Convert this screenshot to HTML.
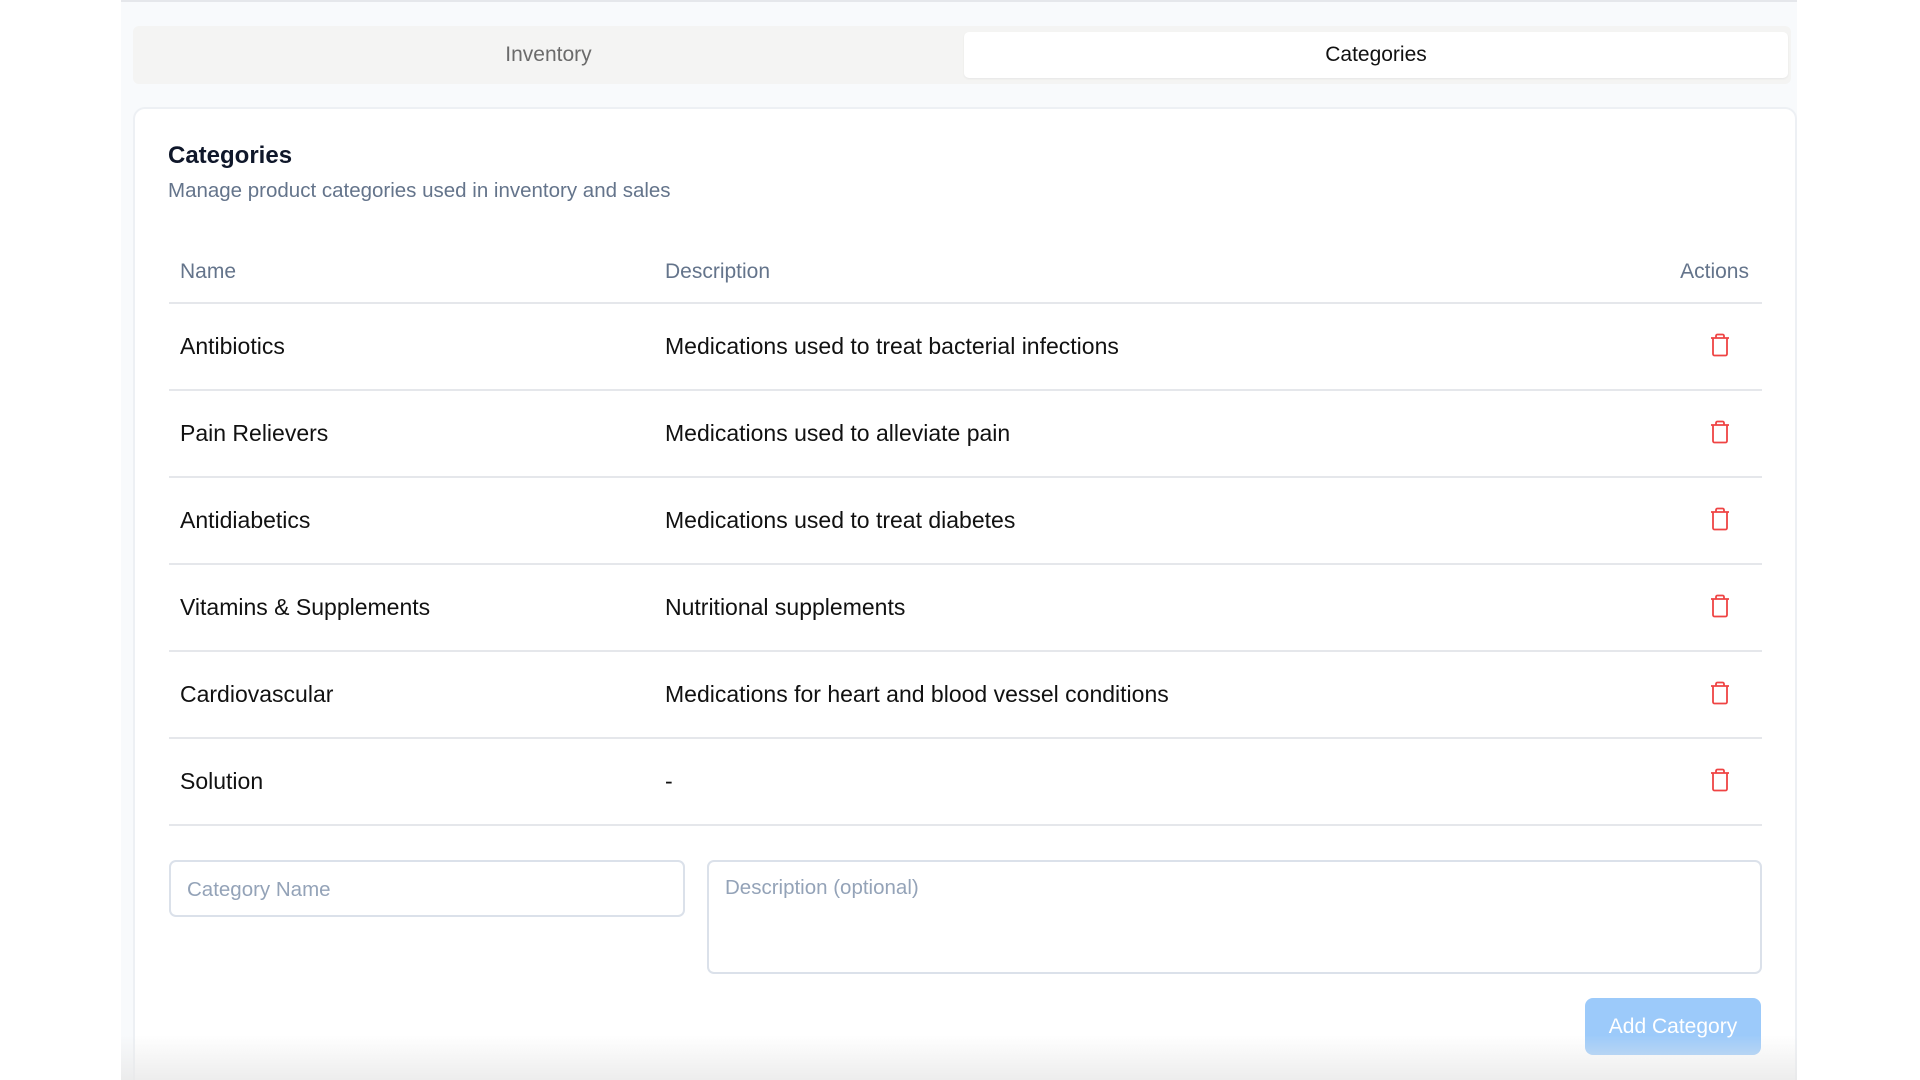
<!DOCTYPE html>
<html><head><meta charset="utf-8"><style>
*{box-sizing:border-box;margin:0;padding:0}
html,body{width:1920px;height:1080px;overflow:hidden}
body{background:#fff;font-family:"Liberation Sans",Arial,sans-serif;position:relative}
.wrap{position:absolute;left:121px;top:0;width:1676px;height:1080px;background:#f8fafc;border-top:2px solid #e5e7eb;overflow:hidden}
.tabs{position:absolute;left:12px;top:24px;width:1658px;height:58px;background:#f4f4f3;border-radius:6px}
.tab{position:absolute;top:0;height:58px;line-height:58px;text-align:center;font-size:21px;color:#6b6b6b}
.tab.a{left:831px;top:6px;width:824px;height:46px;line-height:46px;background:#fff;color:#111;border-radius:5px;box-shadow:0 1px 2px rgba(0,0,0,.06)}
.card{position:absolute;left:12px;top:105px;width:1664px;height:1000px;background:#fff;border:2px solid #edf0f4;border-radius:12px}
h1{position:absolute;left:33px;top:33px;font-size:24px;font-weight:bold;color:#0f172a}
.sub{position:absolute;left:33px;top:70px;font-size:20.5px;color:#64748b}
.th{position:absolute;top:151px;font-size:21px;color:#64748b}
.line{position:absolute;left:34px;width:1593px;height:2px;background:#e5e7eb}
.cell{position:absolute;font-size:23px;color:#111}
.trash{position:absolute;left:1574px}
.ph{position:absolute;font-size:20.5px;color:#94a3b8}
.btn{position:absolute;left:1450px;top:889px;width:176px;height:57px;background:#9ccafa;border-radius:8px;color:#fff;font-size:21px;text-align:center;line-height:57px}
.fade{position:absolute;left:0;right:0;bottom:0;height:45px;background:linear-gradient(to bottom,rgba(255,255,255,0),rgba(232,232,232,.8))}
</style></head><body>
<div class="wrap">
<div class="tabs"><div class="tab" style="left:0;width:831px">Inventory</div><div class="tab a">Categories</div></div>
<div class="card">
<h1>Categories</h1>
<div class="sub">Manage product categories used in inventory and sales</div>
<div class="th" style="left:45px">Name</div>
<div class="th" style="left:530px">Description</div>
<div class="th" style="right:46px">Actions</div>
<div class="line" style="top:193px"></div>
<div class="cell" style="left:45px;top:224px">Antibiotics</div><div class="cell" style="left:530px;top:224px">Medications used to treat bacterial infections</div>
<div class="line" style="top:280px"></div>
<div class="cell" style="left:45px;top:311px">Pain Relievers</div><div class="cell" style="left:530px;top:311px">Medications used to alleviate pain</div>
<div class="line" style="top:367px"></div>
<div class="cell" style="left:45px;top:398px">Antidiabetics</div><div class="cell" style="left:530px;top:398px">Medications used to treat diabetes</div>
<div class="line" style="top:454px"></div>
<div class="cell" style="left:45px;top:485px">Vitamins &amp; Supplements</div><div class="cell" style="left:530px;top:485px">Nutritional supplements</div>
<div class="line" style="top:541px"></div>
<div class="cell" style="left:45px;top:572px">Cardiovascular</div><div class="cell" style="left:530px;top:572px">Medications for heart and blood vessel conditions</div>
<div class="line" style="top:628px"></div>
<div class="cell" style="left:45px;top:659px">Solution</div><div class="cell" style="left:530px;top:659px">-</div>
<div class="line" style="top:715px"></div>
<svg class="trash" style="top:224px" width="22" height="24" viewBox="0 0 22 24" fill="none" stroke="#ef4444" stroke-width="1.8"><path d="M2 5h18M7 5V3a1.5 1.5 0 0 1 1.5-1.5h5A1.5 1.5 0 0 1 15 3v2M4 5v16a1.5 1.5 0 0 0 1.5 1.5h11A1.5 1.5 0 0 0 18 21V5"/></svg>
<svg class="trash" style="top:311px" width="22" height="24" viewBox="0 0 22 24" fill="none" stroke="#ef4444" stroke-width="1.8"><path d="M2 5h18M7 5V3a1.5 1.5 0 0 1 1.5-1.5h5A1.5 1.5 0 0 1 15 3v2M4 5v16a1.5 1.5 0 0 0 1.5 1.5h11A1.5 1.5 0 0 0 18 21V5"/></svg>
<svg class="trash" style="top:398px" width="22" height="24" viewBox="0 0 22 24" fill="none" stroke="#ef4444" stroke-width="1.8"><path d="M2 5h18M7 5V3a1.5 1.5 0 0 1 1.5-1.5h5A1.5 1.5 0 0 1 15 3v2M4 5v16a1.5 1.5 0 0 0 1.5 1.5h11A1.5 1.5 0 0 0 18 21V5"/></svg>
<svg class="trash" style="top:485px" width="22" height="24" viewBox="0 0 22 24" fill="none" stroke="#ef4444" stroke-width="1.8"><path d="M2 5h18M7 5V3a1.5 1.5 0 0 1 1.5-1.5h5A1.5 1.5 0 0 1 15 3v2M4 5v16a1.5 1.5 0 0 0 1.5 1.5h11A1.5 1.5 0 0 0 18 21V5"/></svg>
<svg class="trash" style="top:572px" width="22" height="24" viewBox="0 0 22 24" fill="none" stroke="#ef4444" stroke-width="1.8"><path d="M2 5h18M7 5V3a1.5 1.5 0 0 1 1.5-1.5h5A1.5 1.5 0 0 1 15 3v2M4 5v16a1.5 1.5 0 0 0 1.5 1.5h11A1.5 1.5 0 0 0 18 21V5"/></svg>
<svg class="trash" style="top:659px" width="22" height="24" viewBox="0 0 22 24" fill="none" stroke="#ef4444" stroke-width="1.8"><path d="M2 5h18M7 5V3a1.5 1.5 0 0 1 1.5-1.5h5A1.5 1.5 0 0 1 15 3v2M4 5v16a1.5 1.5 0 0 0 1.5 1.5h11A1.5 1.5 0 0 0 18 21V5"/></svg>
<div style="position:absolute;left:34px;top:751px;width:516px;height:57px;border:2px solid #dbe1ea;border-radius:7px"></div>
<div class="ph" style="left:52px;top:769px">Category Name</div>
<div style="position:absolute;left:572px;top:751px;width:1055px;height:114px;border:2px solid #dbe1ea;border-radius:7px"></div>
<div class="ph" style="left:590px;top:767px">Description (optional)</div>
<div class="btn">Add Category</div>
</div>
<div class="fade"></div>
</div>
</body></html>
